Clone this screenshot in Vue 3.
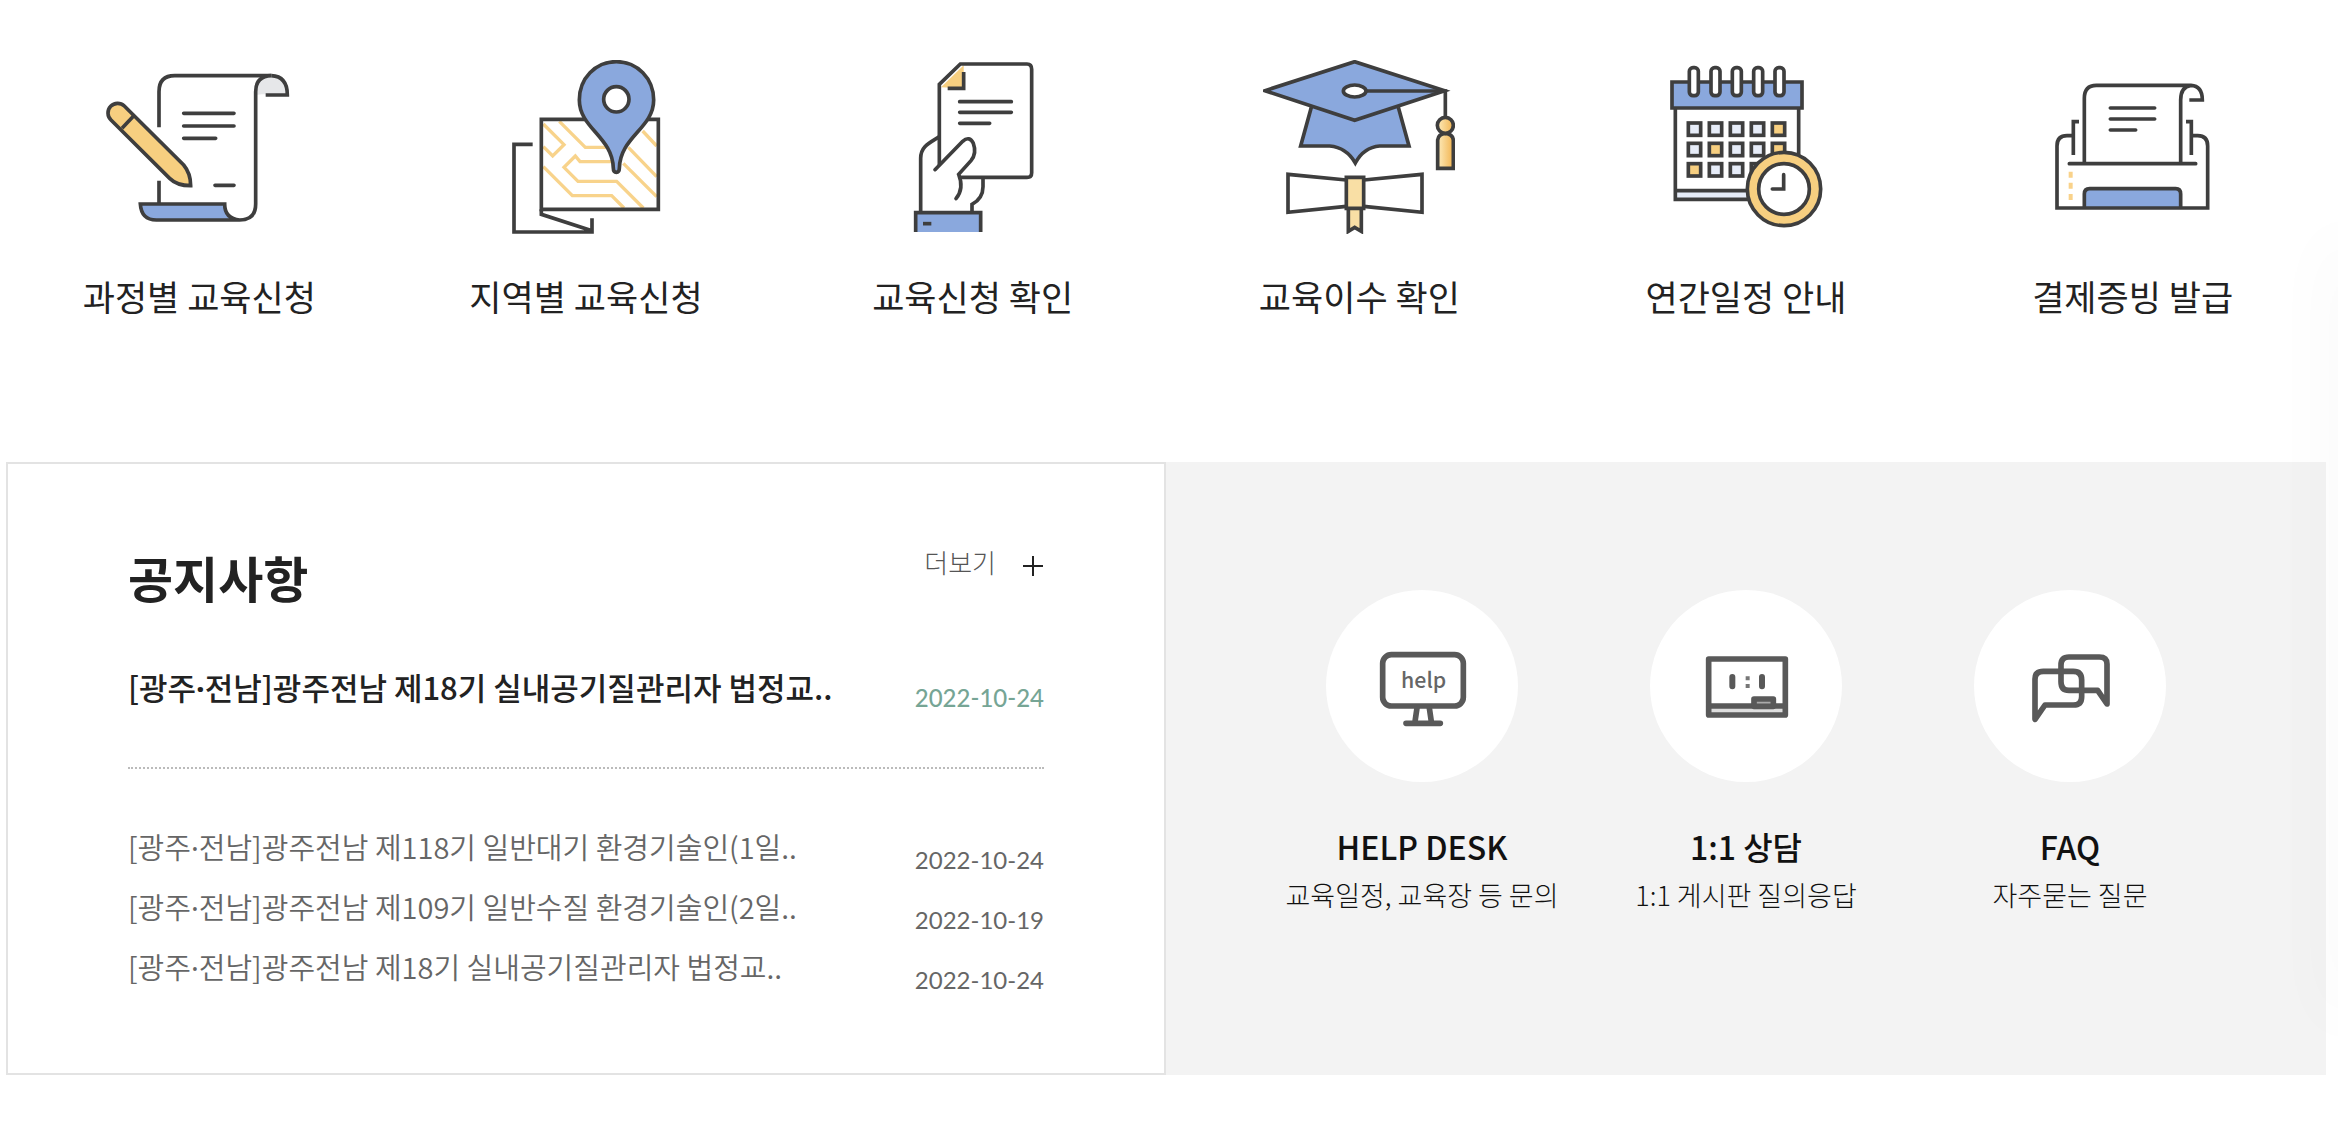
<template>
  <div class="main">
    <!-- Shortcuts -->
    <ul class="shortcuts">
      <li v-for="s in shortcuts" :key="s.icon">
        <a href="#" class="shortcut">
          <svg class="shortcut-icon" :viewBox="s.box" aria-hidden="true">
            <g v-if="s.icon === 'course'">
              <path class="line" d="M298 262V155Q298 107 345 107H635" />
              <path class="fill-gray" d="M588 165V155Q590 107 635 107Q683 107 683 163H606Z" />
              <path class="line" d="M635 107Q683 109 683 165H618M298 422V492" />
              <path class="fill-blue" d="M242 492H495Q497 528 522 540H290Q245 538 242 492Z" />
              <path class="line" d="M635 107Q588 109 588 155V492Q588 540 540 540Q495 536 495 492H242Q245 540 290 540H540" />
              <path class="line round" d="M372 220H523M372 258H523M372 295H468M466 436H523" />
              <path class="line fill-yellow" d="M330 415L154 240A28 28 0 0 1 194 198L372 375Q393 400 393 437Q352 437 330 415Z" />
              <path class="line" d="M221 229L187 265" />
            </g>

            <g v-else-if="s.icon === 'region'">
              <path class="line" d="M248 313H192V576H426V535M274 508V523L426 572" />
              <path
                class="road"
                d="M280 252L342 314L308 348L280 320M328 244L406 322H470M490 365H390L376 348L342 382L384 424H500L580 504M280 380L367 467H485L522 504M520 370L620 470M535 322L620 410M578 273L620 318"
              />
              <path class="line" d="M274 238H625V508H274Z" />
              <path
                class="line fill-blue"
                d="M499 65C562 65 611 115 611 180C611 265 510 290 508 385Q508 397 499 397Q490 397 490 385C488 290 388 265 388 180C388 115 436 65 499 65Z"
              />
              <circle class="line fill-white" cx="499" cy="178" r="38" />
            </g>

            <g v-else-if="s.icon === 'check'">
              <path class="fill-yellow" d="M272 142L340 76V145Z" />
              <path class="line" d="M267 375V133L330 72H530Q544 72 544 88V398Q544 412 530 412H330" />
              <path class="line" d="M340 96V145H292" />
              <path class="line round" d="M328 185H483M328 217H483M328 250H418" />
              <path class="line" d="M267 290C235 310 211 320 211 355V515" />
              <path class="line round" d="M254 389L337 304C350 292 362 294 369 310Q380 340 362 362L325 403Q342 445 317 476" />
              <path class="line" d="M398 415V440Q398 475 365 493V515" />
              <path class="line fill-blue" d="M196 576V518H391V576" />
              <path class="line" d="M218 551H243" />
            </g>

            <g v-else-if="s.icon === 'complete'">
              <defs>
                <linearGradient id="tassel">
                  <stop offset="0.2" stop-color="#fbe0a6" />
                  <stop offset="1" stop-color="#f2b450" />
                </linearGradient>
              </defs>
              <path class="line fill-blue" d="M245 202L213 318H300Q350 322 377 369Q402 322 450 318H538L506 202" />
              <path class="line fill-blue" d="M106 152L375 65L645 152L375 241Z" />
              <path class="line" d="M410 153H647V235" />
              <ellipse class="line fill-white" cx="375" cy="153" rx="34" ry="18" />
              <path class="line fill-tassel" d="M624 385V300Q626 282 647 280Q669 282 671 300V385Z" />
              <circle class="line fill-tassel" cx="647" cy="256" r="24" />
              <path class="line" d="M350 420L175 403V517L350 499M402 420L577 403V517L402 499" />
              <path class="line fill-cream" d="M356 505V574L375 562L395 574V505" />
              <path class="line fill-cream" d="M350 412H402V505H350Z" />
            </g>

            <g v-else-if="s.icon === 'calendar'">
              <path class="fill-cell" d="M166 452H400V478H166Z" />
              <path class="line" d="M166 205V478H400M166 452H400M536 205V350" />
              <path class="line fill-blue" d="M156 126H546V204H156Z" />
              <rect
                v-for="x in [221, 286, 350, 414, 478]"
                :key="'ring' + x"
                class="line fill-white"
                :x="x - 13"
                y="83"
                width="27"
                height="84"
                rx="11"
              />
              <rect
                v-for="d in days"
                :key="'day' + d.id"
                class="line"
                :class="d.marked ? 'fill-yellow' : 'fill-cell'"
                :x="d.x"
                :y="d.y"
                width="37"
                height="37"
              />
              <circle class="line fill-yellow" cx="492" cy="447" r="110" />
              <circle class="line fill-white" cx="492" cy="447" r="76" />
              <path class="line round" d="M491 404V447H457" />
            </g>

            <g v-else>
              <path class="line" d="M252 370V175Q252 136 288 136H572Q606 138 606 180H567M572 136Q541 140 541 180V370" />
              <path class="line round" d="M330 204H463M330 237H463M330 270H406" />
              <path class="line" d="M236 245H219V345M557 245H573V345" />
              <path class="fill-blue" d="M252 504V462Q252 446 268 446H526Q541 446 541 462V504Z" />
              <path class="line" d="M219 287H200Q170 287 170 318V504H622V318Q622 287 592 287H573" />
              <path class="line" d="M252 504V462Q252 446 268 446H526Q541 446 541 462V504" />
              <path class="line round" d="M207 371H586" />
              <path class="lamp" d="M211 395V413M211 428V446M211 462V480" />
            </g>
          </svg>
          <span class="shortcut-label">{{ s.label }}</span>
        </a>
      </li>
    </ul>

    <div class="board">
      <!-- Notices -->
      <section class="notice">
        <div class="notice-head">
          <h2 class="notice-title">공지사항</h2>
          <a href="#" class="more">
            더보기
            <svg class="more-icon" viewBox="0 0 22 30" aria-hidden="true">
              <path d="M11 9V29M1 19H21" />
            </svg>
          </a>
        </div>
        <a href="#" class="notice-row notice-top">
          <span class="notice-subject">[광주<span class="dot">·</span>전남]{{ topNotice.subject }}</span>
          <time class="notice-date">{{ topNotice.date }}</time>
        </a>
        <ul class="notice-list">
          <li v-for="n in notices" :key="n.subject">
            <a href="#" class="notice-row">
              <span class="notice-subject">[광주<span class="dot">·</span>전남]{{ n.subject }}</span>
              <time class="notice-date">{{ n.date }}</time>
            </a>
          </li>
        </ul>
      </section>

      <!-- Support -->
      <ul class="support">
        <li v-for="h in supports" :key="h.icon">
          <a href="#" class="support-link">
            <svg class="support-icon" :viewBox="h.box" aria-hidden="true">
              <g v-if="h.icon === 'help'">
                <rect class="stroke" x="188" y="224" width="242" height="154" rx="26" />
                <path class="stroke" d="M291 384L285 425M328 384L334 425M258 430H361" />
                <text class="help-text" x="311" y="323" text-anchor="middle">help</text>
              </g>
              <g v-else-if="h.icon === 'talk'">
                <path class="fill-tray" d="M1166 378H1396V405H1166Z" />
                <path class="stroke" d="M1166 237H1396V405H1166ZM1166 378H1396" />
                <rect class="stroke fill-eraser" x="1302" y="357" width="58" height="22" />
                <path class="pill" d="M1237 291V319M1326 291V319" />
                <path class="dots" d="M1277 289H1289V301H1277ZM1277 312H1289V324H1277Z" />
              </g>
              <g v-else>
                <path class="stroke" d="M621 372L593 331H507Q483 331 483 305V255Q483 231 507 231H598Q621 231 621 252Z" />
                <path class="stroke" d="M405 418V297Q405 274 430 274H520Q545 274 545 300V350Q545 375 520 375H435Z" />
              </g>
            </svg>
            <strong class="support-title">{{ h.title }}</strong>
            <span class="support-desc">{{ h.desc }}</span>
          </a>
        </li>
      </ul>
    </div>

    <div class="side-shadow"></div>
  </div>
</template>

<script setup>
const shortcuts = [
  { icon: "course", label: "과정별 교육신청", box: "130 60 576 522" },
  { icon: "region", label: "지역별 교육신청", box: "120 60 576 522" },
  { icon: "check", label: "교육신청 확인", box: "80 60 576 522" },
  { icon: "complete", label: "교육이수 확인", box: "100 60 576 522" },
  { icon: "calendar", label: "연간일정 안내", box: "90 60 576 522" },
  { icon: "receipt", label: "결제증빙 발급", box: "110 60 576 522" },
];

// calendar cells, row by row
const marked = [4, 6, 9, 10];
const days = Array.from({ length: 14 }, (_, i) => ({
  id: i,
  x: 205 + (i % 5) * 63,
  y: 249 + Math.floor(i / 5) * 61,
  marked: marked.includes(i),
}));

const topNotice = {
  subject: "광주전남 제18기 실내공기질관리자 법정교..",
  date: "2022-10-24",
};

const notices = [
  { subject: "광주전남 제118기 일반대기 환경기술인(1일..", date: "2022-10-24" },
  { subject: "광주전남 제109기 일반수질 환경기술인(2일..", date: "2022-10-19" },
  { subject: "광주전남 제18기 실내공기질관리자 법정교..", date: "2022-10-24" },
];

const supports = [
  { icon: "help", title: "HELP DESK", desc: "교육일정, 교육장 등 문의", box: "18 30 576 576" },
  { icon: "talk", title: "1:1 상담", desc: "1:1 게시판 질의응답", box: "990 30 576 576" },
  { icon: "faq", title: "FAQ", desc: "자주묻는 질문", box: "222 30 576 576" },
];
</script>

<style>
body {
  margin: 0;
  background: #fff;
}
</style>

<style scoped>
.main {
  padding: 60px 12px 0 6px;
  font-family: "Noto Sans CJK KR", "Noto Sans", sans-serif;
  color: #222;
}
ul {
  margin: 0;
  padding: 0;
  list-style: none;
}
a {
  color: inherit;
  text-decoration: none;
}

.shortcuts {
  display: grid;
  grid-template-columns: repeat(6, 1fr);
}
.shortcut {
  display: flex;
  flex-direction: column;
  align-items: center;
  gap: 36px;
}
.shortcut-icon {
  width: 192px;
  height: 174px;
}
.shortcut-label {
  font-size: 35px;
  font-weight: 400;
  line-height: 52px;
}

.line {
  fill: none;
  stroke: #3e3e3e;
  stroke-width: 11;
}
.round { stroke-linecap: round; }
.fill-blue { fill: #8aa8dd; }
.fill-yellow { fill: #f7cf80; }
.fill-cream { fill: #f9dfa5; }
.fill-gray { fill: #e6e7e9; }
.fill-cell { fill: #e6ecf8; }
.fill-white { fill: #fff; }
.fill-tassel { fill: url(#tassel); }
.road {
  fill: none;
  stroke: #f8d38b;
  stroke-width: 10;
}
.lamp {
  stroke: #f9d28a;
  stroke-width: 12;
}

.board {
  display: grid;
  grid-template-columns: 1fr 1fr;
  margin-top: 140px;
}
.notice {
  padding: 77px 120px;
  border: 2px solid #e3e3e3;
}
.notice-head {
  display: flex;
  justify-content: space-between;
  align-items: flex-start;
  margin-bottom: 50px;
}
.notice-title {
  margin: 0;
  font-size: 49px;
  font-weight: 700;
  line-height: 72px;
}
.more {
  display: flex;
  align-items: center;
  gap: 26px;
  font-size: 26px;
  font-weight: 300;
  line-height: 42px;
  color: #555;
}
.more-icon {
  width: 22px;
  height: 30px;
  fill: none;
  stroke: #222;
  stroke-width: 2;
}
.notice-row {
  display: flex;
  justify-content: space-between;
  align-items: flex-end;
  font-size: 29px;
  font-weight: 350;
  line-height: 60px;
  color: #666;
}
.notice-subject {
  white-space: nowrap;
}
.dot {
  font-family: "Noto Sans", sans-serif;
  font-weight: 400;
  line-height: 1;
}
.notice-date {
  font-family: Lato, sans-serif;
  font-size: 24px;
  font-weight: 400;
  line-height: 32px;
}
.notice-top {
  padding-bottom: 56px;
  border-bottom: 2px dotted #bbb;
  font-size: 31px;
  font-weight: 500;
  line-height: 48px;
  color: #222;
}
.notice-top .dot {
  font-weight: 700;
}
.notice-top .notice-date {
  font-weight: 500;
  line-height: 26px;
  color: #76a595;
}
.notice-list {
  margin-top: 47px;
}

.support {
  display: grid;
  grid-template-columns: repeat(3, 1fr);
  padding: 128px 94px 0;
  background: #f3f3f3;
}
.support-link {
  display: flex;
  flex-direction: column;
  align-items: center;
  color: #111;
}
.support-icon {
  width: 192px;
  height: 192px;
  margin-bottom: 40px;
  border-radius: 50%;
  background: #fff;
}
.support-title {
  font-size: 32px;
  font-weight: 500;
  line-height: 48px;
}
.support-desc {
  margin-top: 4px;
  font-size: 27px;
  font-weight: 300;
  line-height: 42px;
}
.stroke {
  fill: none;
  stroke: #595959;
  stroke-width: 17;
  stroke-linecap: round;
  stroke-linejoin: round;
}
.help-text {
  font-size: 64px;
  font-weight: 500;
  fill: #666;
}
.fill-tray { fill: #ddd; }
.fill-eraser { fill: #aaa; }
.pill {
  stroke: #595959;
  stroke-width: 18;
  stroke-linecap: round;
}
.dots { fill: #777; }

/* soft shade along the right edge of the window */
.side-shadow {
  position: fixed;
  top: 240px;
  right: -20px;
  bottom: 110px;
  width: 20px;
  box-shadow: 0 0 70px rgba(0, 0, 0, 0.06);
  pointer-events: none;
}
</style>
